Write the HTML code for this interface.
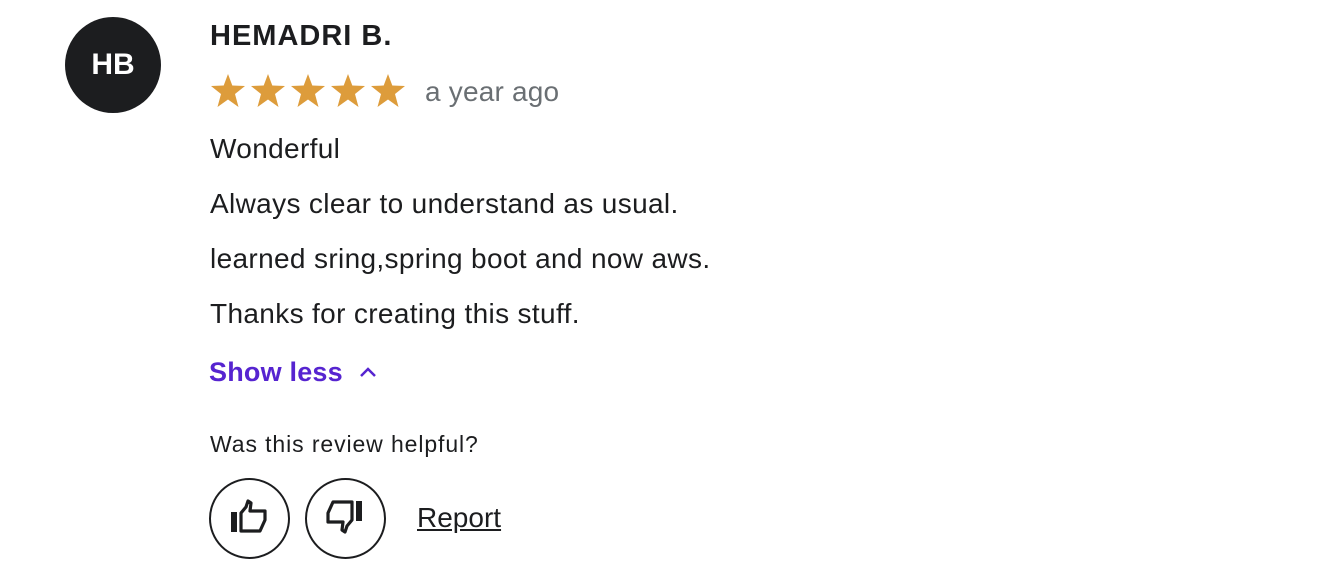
<!DOCTYPE html>
<html><head><style>
body{margin:0;width:1322px;height:580px;background:#fff;font-family:"Liberation Sans",sans-serif;color:#1c1d1f;position:relative;overflow:hidden}
.a{position:absolute}
</style></head><body>
<div class="a" style="left:65px;top:17px;width:96px;height:96px;border-radius:50%;background:#1c1d1f;color:#fff;font-weight:bold;font-size:30px;line-height:96px;text-align:center">HB</div>
<div class="a" style="left:210px;top:20px;font-weight:bold;font-size:29px;letter-spacing:1px">HEMADRI B.</div>
<svg class="a" style="left:210px;top:73px" width="200" height="36" viewBox="0 0 200 36">
<g fill="#dd9c3b">
<polygon id="s" points="18,1 22.3,12.5 35,13 25,21 28.5,34 18,26.5 7.5,34 11,21 1,13 13.7,12.5"/>
<use href="#s" x="40"/><use href="#s" x="80"/><use href="#s" x="120"/><use href="#s" x="160"/>
</g></svg>
<div class="a" style="left:425px;top:76px;font-size:28px;color:#6a6f73;letter-spacing:0.2px">a year ago</div>
<div class="a" style="left:210px;top:121px;font-size:28px;line-height:55px;letter-spacing:0.35px">Wonderful<br>Always clear to understand as usual.<br>learned sring,spring boot and now aws.<br>Thanks for creating this stuff.</div>
<div class="a" style="left:209px;top:357px;font-size:27px;font-weight:bold;color:#5624d0;letter-spacing:0.2px">Show less</div>
<svg class="a" style="left:358px;top:364px" width="20" height="16" viewBox="0 0 20 16"><path d="M3 12 L10 5 L17 12" fill="none" stroke="#5624d0" stroke-width="2.5"/></svg>
<div class="a" style="left:210px;top:431px;font-size:23px;letter-spacing:0.9px">Was this review helpful?</div>
<div class="a" style="left:209px;top:478px;width:77px;height:77px;border:2px solid #1c1d1f;border-radius:50%"></div>
<div class="a" style="left:305px;top:478px;width:77px;height:77px;border:2px solid #1c1d1f;border-radius:50%"></div>
<svg class="a" style="left:229px;top:498px" width="40" height="40" viewBox="0 0 40 40">
<rect x="2" y="14" width="6" height="20" fill="#1c1d1f"/>
<path d="M12 15 L17 9 L19 3 L22 5 L21 13 L36 13 L36 22 L31 33 L12 33 Z" fill="none" stroke="#1c1d1f" stroke-width="3.2" stroke-linejoin="round"/>
</svg>
<svg class="a" style="left:325px;top:498px" width="40" height="40" viewBox="0 0 40 40">
<rect x="31" y="3" width="6" height="20" fill="#1c1d1f"/>
<path d="M27 22 L22 28 L20 34 L17 32 L18 24 L3 24 L3 15 L8 4 L27 4 Z" fill="none" stroke="#1c1d1f" stroke-width="3.2" stroke-linejoin="round"/>
</svg>
<div class="a" style="left:417px;top:502px;font-size:28px;text-decoration:underline">Report</div>
</body></html>
